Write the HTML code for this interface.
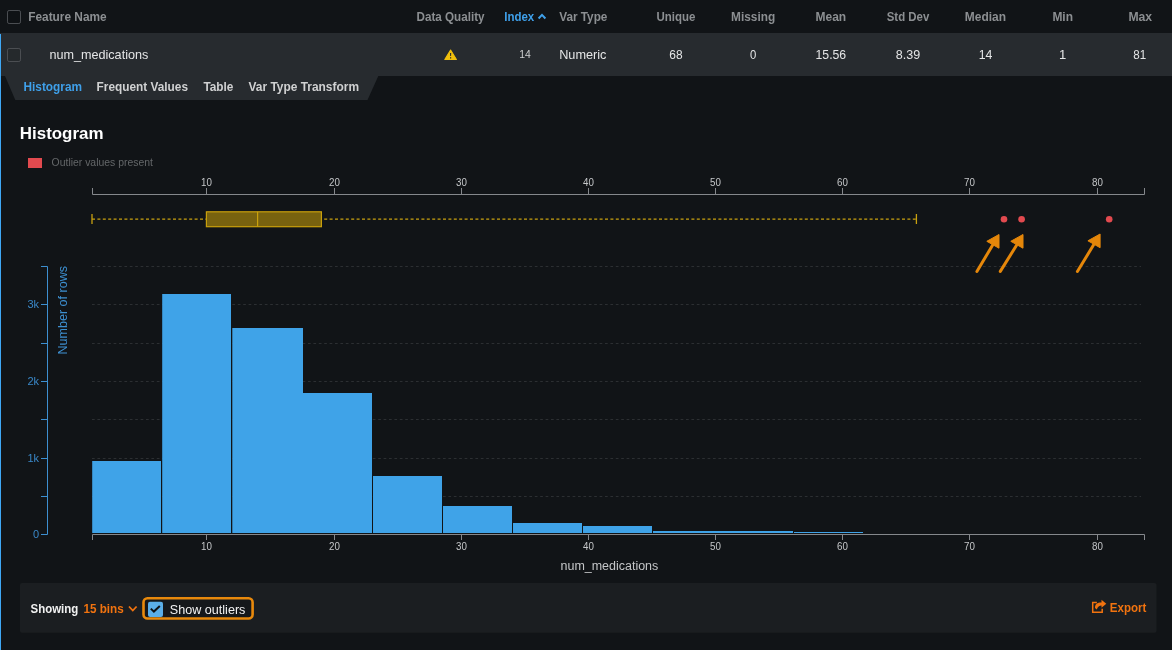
<!DOCTYPE html>
<html><head><meta charset="utf-8">
<style>
html,body{margin:0;padding:0;background:#111417;}
body{width:1172px;height:650px;overflow:hidden;position:relative;}
svg{position:absolute;left:0;top:0;display:block;will-change:transform;}
text{font-family:"Liberation Sans",sans-serif;white-space:pre;}
</style></head>
<body>
<svg width="1172" height="650" viewBox="0 0 1172 650">
<rect x="0" y="0" width="1172" height="650" fill="#111417"/>
<rect x="0" y="33" width="1172" height="43" fill="#272b2f"/>
<polygon points="5,76 378.3,76 367.5,100 15.3,100" fill="#272b2f"/>
<rect x="0" y="34" width="1" height="616" fill="#3fa8f5"/>
<rect x="7.5" y="10.5" width="13" height="13" rx="1.6" fill="#0f1215" stroke="#4b4e52" stroke-width="1"/>
<rect x="7.5" y="48.5" width="13" height="13" rx="1.6" fill="#25292c" stroke="#4b4e52" stroke-width="1"/>
<text x="28.20" y="21.20" font-size="13" font-weight="bold" fill="#8c8f92" textLength="78.50" lengthAdjust="spacingAndGlyphs" >Feature Name</text>
<text x="416.50" y="21.20" font-size="13" font-weight="bold" fill="#8c8f92" textLength="68.00" lengthAdjust="spacingAndGlyphs" >Data Quality</text>
<text x="559.20" y="21.20" font-size="13" font-weight="bold" fill="#8c8f92" textLength="48.20" lengthAdjust="spacingAndGlyphs" >Var Type</text>
<text x="656.40" y="21.20" font-size="13" font-weight="bold" fill="#8c8f92" textLength="38.90" lengthAdjust="spacingAndGlyphs" >Unique</text>
<text x="731.10" y="21.20" font-size="13" font-weight="bold" fill="#8c8f92" textLength="44.10" lengthAdjust="spacingAndGlyphs" >Missing</text>
<text x="815.50" y="21.20" font-size="13" font-weight="bold" fill="#8c8f92" textLength="30.70" lengthAdjust="spacingAndGlyphs" >Mean</text>
<text x="886.70" y="21.20" font-size="13" font-weight="bold" fill="#8c8f92" textLength="42.60" lengthAdjust="spacingAndGlyphs" >Std Dev</text>
<text x="964.80" y="21.20" font-size="13" font-weight="bold" fill="#8c8f92" textLength="41.20" lengthAdjust="spacingAndGlyphs" >Median</text>
<text x="1052.40" y="21.20" font-size="13" font-weight="bold" fill="#8c8f92" textLength="20.60" lengthAdjust="spacingAndGlyphs" >Min</text>
<text x="1128.40" y="21.20" font-size="13" font-weight="bold" fill="#8c8f92" textLength="23.70" lengthAdjust="spacingAndGlyphs" >Max</text>
<text x="504.20" y="21.20" font-size="13" font-weight="bold" fill="#3fa0ea" textLength="30.00" lengthAdjust="spacingAndGlyphs" >Index</text>
<polyline points="538.6,18.5 542,14.9 545.4,18.5" fill="none" stroke="#3fa0ea" stroke-width="2"/>
<text x="49.40" y="58.90" font-size="13" font-weight="normal" fill="#e4e5e6" textLength="98.90" lengthAdjust="spacingAndGlyphs" >num_medications</text>
<text x="559.20" y="58.90" font-size="13" font-weight="normal" fill="#e4e5e6" textLength="47.30" lengthAdjust="spacingAndGlyphs" >Numeric</text>
<text x="669.30" y="58.90" font-size="13" font-weight="normal" fill="#e4e5e6" textLength="13.30" lengthAdjust="spacingAndGlyphs" >68</text>
<text x="750.00" y="58.90" font-size="13" font-weight="normal" fill="#e4e5e6" textLength="6.30" lengthAdjust="spacingAndGlyphs" >0</text>
<text x="815.50" y="58.90" font-size="13" font-weight="normal" fill="#e4e5e6" textLength="30.70" lengthAdjust="spacingAndGlyphs" >15.56</text>
<text x="895.80" y="58.90" font-size="13" font-weight="normal" fill="#e4e5e6" textLength="24.40" lengthAdjust="spacingAndGlyphs" >8.39</text>
<text x="978.70" y="58.90" font-size="13" font-weight="normal" fill="#e4e5e6" textLength="13.70" lengthAdjust="spacingAndGlyphs" >14</text>
<text x="1133.30" y="58.90" font-size="13" font-weight="normal" fill="#e4e5e6" textLength="12.90" lengthAdjust="spacingAndGlyphs" >81</text>
<text x="519.20" y="58.20" font-size="10.5" font-weight="normal" fill="#cfd0d1" textLength="11.60" lengthAdjust="spacingAndGlyphs" >14</text>
<text x="1062.6" y="58.9" font-size="13" fill="#e4e5e6" text-anchor="middle">1</text>
<polygon points="450.6,50 456.4,59.5 444.8,59.5" fill="#f0bf0c" stroke="#f0bf0c" stroke-width="1.1" stroke-linejoin="round"/>
<path d="M450,53 h1.2 l-0.15,3 h-0.9 z" fill="#272b2f"/>
<rect x="450" y="57.2" width="1.2" height="1.3" fill="#272b2f"/>
<text x="23.50" y="90.70" font-size="13" font-weight="bold" fill="#3fa0ea" textLength="58.50" lengthAdjust="spacingAndGlyphs" >Histogram</text>
<text x="96.60" y="90.70" font-size="13" font-weight="bold" fill="#d0d1d2" textLength="91.40" lengthAdjust="spacingAndGlyphs" >Frequent Values</text>
<text x="203.40" y="90.70" font-size="13" font-weight="bold" fill="#d0d1d2" textLength="30.00" lengthAdjust="spacingAndGlyphs" >Table</text>
<text x="248.50" y="90.70" font-size="13" font-weight="bold" fill="#d0d1d2" textLength="110.50" lengthAdjust="spacingAndGlyphs" >Var Type Transform</text>
<text x="19.80" y="138.50" font-size="17" font-weight="bold" fill="#ffffff" textLength="83.70" lengthAdjust="spacingAndGlyphs" >Histogram</text>
<rect x="28" y="158" width="14" height="10" fill="#e24a4f"/>
<text x="51.60" y="166.20" font-size="11" font-weight="normal" fill="#646769" textLength="101.30" lengthAdjust="spacingAndGlyphs" >Outlier values present</text>
<line x1="92" y1="496.5" x2="1141" y2="496.5" stroke="#2c2f32" stroke-width="1" stroke-dasharray="2.7,2.7"/>
<line x1="92" y1="458.5" x2="1141" y2="458.5" stroke="#2c2f32" stroke-width="1" stroke-dasharray="2.7,2.7"/>
<line x1="92" y1="419.5" x2="1141" y2="419.5" stroke="#2c2f32" stroke-width="1" stroke-dasharray="2.7,2.7"/>
<line x1="92" y1="381.5" x2="1141" y2="381.5" stroke="#2c2f32" stroke-width="1" stroke-dasharray="2.7,2.7"/>
<line x1="92" y1="343.5" x2="1141" y2="343.5" stroke="#2c2f32" stroke-width="1" stroke-dasharray="2.7,2.7"/>
<line x1="92" y1="304.5" x2="1141" y2="304.5" stroke="#2c2f32" stroke-width="1" stroke-dasharray="2.7,2.7"/>
<line x1="92" y1="266.5" x2="1141" y2="266.5" stroke="#2c2f32" stroke-width="1" stroke-dasharray="2.7,2.7"/>
<rect x="92.2" y="461" width="68.8" height="72.0" fill="#3fa3e8"/>
<rect x="162.2" y="294" width="68.8" height="239.0" fill="#3fa3e8"/>
<rect x="232.3" y="328" width="70.7" height="205.0" fill="#3fa3e8"/>
<rect x="302.0" y="393" width="70.0" height="140.0" fill="#3fa3e8"/>
<rect x="373.0" y="476" width="69.0" height="57.0" fill="#3fa3e8"/>
<rect x="443.0" y="506" width="69.0" height="27.0" fill="#3fa3e8"/>
<rect x="513.0" y="523" width="69.0" height="10.0" fill="#3fa3e8"/>
<rect x="583.0" y="526" width="69.0" height="7.0" fill="#3fa3e8"/>
<rect x="653.0" y="531" width="140.0" height="2.0" fill="#3fa3e8"/>
<rect x="794.0" y="532" width="69.0" height="1.0" fill="#3fa3e8"/>
<path d="M92.5,540V534.5H1144.5V540" fill="none" stroke="#85888c" stroke-width="1"/>
<line x1="206.5" y1="534" x2="206.5" y2="540" stroke="#85888c"/>
<text x="201.05" y="550" fill="#c4c6c8" font-size="11" textLength="10.9" lengthAdjust="spacingAndGlyphs">10</text>
<line x1="334.5" y1="534" x2="334.5" y2="540" stroke="#85888c"/>
<text x="329.05" y="550" fill="#c4c6c8" font-size="11" textLength="10.9" lengthAdjust="spacingAndGlyphs">20</text>
<line x1="461.5" y1="534" x2="461.5" y2="540" stroke="#85888c"/>
<text x="456.05" y="550" fill="#c4c6c8" font-size="11" textLength="10.9" lengthAdjust="spacingAndGlyphs">30</text>
<line x1="588.5" y1="534" x2="588.5" y2="540" stroke="#85888c"/>
<text x="583.05" y="550" fill="#c4c6c8" font-size="11" textLength="10.9" lengthAdjust="spacingAndGlyphs">40</text>
<line x1="715.5" y1="534" x2="715.5" y2="540" stroke="#85888c"/>
<text x="710.05" y="550" fill="#c4c6c8" font-size="11" textLength="10.9" lengthAdjust="spacingAndGlyphs">50</text>
<line x1="842.5" y1="534" x2="842.5" y2="540" stroke="#85888c"/>
<text x="837.05" y="550" fill="#c4c6c8" font-size="11" textLength="10.9" lengthAdjust="spacingAndGlyphs">60</text>
<line x1="969.5" y1="534" x2="969.5" y2="540" stroke="#85888c"/>
<text x="964.05" y="550" fill="#c4c6c8" font-size="11" textLength="10.9" lengthAdjust="spacingAndGlyphs">70</text>
<line x1="1097.5" y1="534" x2="1097.5" y2="540" stroke="#85888c"/>
<text x="1092.05" y="550" fill="#c4c6c8" font-size="11" textLength="10.9" lengthAdjust="spacingAndGlyphs">80</text>
<text x="560.50" y="569.70" font-size="12" font-weight="normal" fill="#c4c6c8" textLength="97.80" lengthAdjust="spacingAndGlyphs" >num_medications</text>
<path d="M92.5,188V194.5H1144.5V188" fill="none" stroke="#85888c" stroke-width="1"/>
<line x1="206.5" y1="188" x2="206.5" y2="194" stroke="#85888c"/>
<text x="201.05" y="186" fill="#c4c6c8" font-size="11" textLength="10.9" lengthAdjust="spacingAndGlyphs">10</text>
<line x1="334.5" y1="188" x2="334.5" y2="194" stroke="#85888c"/>
<text x="329.05" y="186" fill="#c4c6c8" font-size="11" textLength="10.9" lengthAdjust="spacingAndGlyphs">20</text>
<line x1="461.5" y1="188" x2="461.5" y2="194" stroke="#85888c"/>
<text x="456.05" y="186" fill="#c4c6c8" font-size="11" textLength="10.9" lengthAdjust="spacingAndGlyphs">30</text>
<line x1="588.5" y1="188" x2="588.5" y2="194" stroke="#85888c"/>
<text x="583.05" y="186" fill="#c4c6c8" font-size="11" textLength="10.9" lengthAdjust="spacingAndGlyphs">40</text>
<line x1="715.5" y1="188" x2="715.5" y2="194" stroke="#85888c"/>
<text x="710.05" y="186" fill="#c4c6c8" font-size="11" textLength="10.9" lengthAdjust="spacingAndGlyphs">50</text>
<line x1="842.5" y1="188" x2="842.5" y2="194" stroke="#85888c"/>
<text x="837.05" y="186" fill="#c4c6c8" font-size="11" textLength="10.9" lengthAdjust="spacingAndGlyphs">60</text>
<line x1="969.5" y1="188" x2="969.5" y2="194" stroke="#85888c"/>
<text x="964.05" y="186" fill="#c4c6c8" font-size="11" textLength="10.9" lengthAdjust="spacingAndGlyphs">70</text>
<line x1="1097.5" y1="188" x2="1097.5" y2="194" stroke="#85888c"/>
<text x="1092.05" y="186" fill="#c4c6c8" font-size="11" textLength="10.9" lengthAdjust="spacingAndGlyphs">80</text>
<line x1="92" y1="219.2" x2="916" y2="219.2" stroke="#c8a010" stroke-width="1.3" stroke-dasharray="3,2.4"/>
<line x1="92" y1="214" x2="92" y2="224" stroke="#c8a010" stroke-width="1.3"/>
<line x1="916.4" y1="214" x2="916.4" y2="224" stroke="#c8a010" stroke-width="1.3"/>
<rect x="206.4" y="211.8" width="115" height="14.9" fill="#78620f" stroke="#c9a00c" stroke-width="1.2"/>
<line x1="257.6" y1="211.8" x2="257.6" y2="226.7" stroke="#c9a00c" stroke-width="1.2"/>
<circle cx="1004" cy="219.2" r="3.3" fill="#e24a4f"/>
<circle cx="1021.6" cy="219.2" r="3.3" fill="#e24a4f"/>
<circle cx="1109.2" cy="219.2" r="3.3" fill="#e24a4f"/>
<line x1="976.9" y1="271.4" x2="993" y2="244.5" stroke="#e5870a" stroke-width="3" stroke-linecap="round"/>
<polygon points="999,234.5 986.8,241.3 999,248.2" fill="#e5870a" stroke="#e5870a" stroke-width="1" stroke-linejoin="round"/>
<line x1="1000.3" y1="271.4" x2="1017" y2="244.5" stroke="#e5870a" stroke-width="3" stroke-linecap="round"/>
<polygon points="1023,234.5 1010.8,241.3 1023,248.2" fill="#e5870a" stroke="#e5870a" stroke-width="1" stroke-linejoin="round"/>
<line x1="1077.4" y1="271.5" x2="1094.1" y2="244" stroke="#e5870a" stroke-width="3" stroke-linecap="round"/>
<polygon points="1100.1,234 1087.8999999999999,240.8 1100.1,247.7" fill="#e5870a" stroke="#e5870a" stroke-width="1" stroke-linejoin="round"/>
<path d="M41,266.5H47.5V534.5H41" fill="none" stroke="#3d8fd0" stroke-width="1"/>
<line x1="41" y1="496.5" x2="47.5" y2="496.5" stroke="#3d8fd0"/>
<line x1="41" y1="458.5" x2="47.5" y2="458.5" stroke="#3d8fd0"/>
<line x1="41" y1="419.5" x2="47.5" y2="419.5" stroke="#3d8fd0"/>
<line x1="41" y1="381.5" x2="47.5" y2="381.5" stroke="#3d8fd0"/>
<line x1="41" y1="343.5" x2="47.5" y2="343.5" stroke="#3d8fd0"/>
<line x1="41" y1="304.5" x2="47.5" y2="304.5" stroke="#3d8fd0"/>
<text x="39" y="537.8" fill="#3a88c8" font-size="11" text-anchor="end">0</text>
<text x="39" y="461.8" fill="#3a88c8" font-size="11" text-anchor="end">1k</text>
<text x="39" y="384.8" fill="#3a88c8" font-size="11" text-anchor="end">2k</text>
<text x="39" y="307.8" fill="#3a88c8" font-size="11" text-anchor="end">3k</text>
<text transform="translate(66.8,354.5) rotate(-90)" fill="#3d8fd0" font-size="13" textLength="88.5" lengthAdjust="spacingAndGlyphs">Number of rows</text>
<rect x="20" y="583" width="1136.5" height="49.7" rx="2" fill="#1b1e21"/>
<text x="30.60" y="613.30" font-size="13" font-weight="bold" fill="#f2f2f2" textLength="47.70" lengthAdjust="spacingAndGlyphs" >Showing</text>
<text x="83.40" y="613.30" font-size="13" font-weight="bold" fill="#f1730f" textLength="40.30" lengthAdjust="spacingAndGlyphs" >15 bins</text>
<polyline points="129,606.5 132.8,610.5 136.6,606.5" fill="none" stroke="#f1730f" stroke-width="1.8"/>
<rect x="143.5" y="598.2" width="109.1" height="20.3" rx="4" fill="#15181b" stroke="#e8890c" stroke-width="2.6"/>
<rect x="148" y="601.7" width="15" height="15.2" rx="2" fill="#5aaee8"/>
<polyline points="150.8,608.6 153.9,611.6 159.8,606.1" fill="none" stroke="#0e1114" stroke-width="2"/>
<text x="169.80" y="613.80" font-size="13" font-weight="normal" fill="#f2f2f2" textLength="75.60" lengthAdjust="spacingAndGlyphs" >Show outliers</text>
<path d="M1096.9,602.4 H1092.7 V612.2 H1102.2 V608.8" fill="none" stroke="#f1730f" stroke-width="1.5"/>
<path d="M1095,608 C1095,604.2 1097,602.6 1101.5,602.6 V599.8 L1106.3,603.8 L1101.5,607.8 V605.5 C1099.4,605.5 1097.6,606.6 1096.8,609.6 Z" fill="#f1730f"/>
<text x="1109.80" y="611.90" font-size="13" font-weight="bold" fill="#f1730f" textLength="36.60" lengthAdjust="spacingAndGlyphs" >Export</text>
</svg>
</body></html>
